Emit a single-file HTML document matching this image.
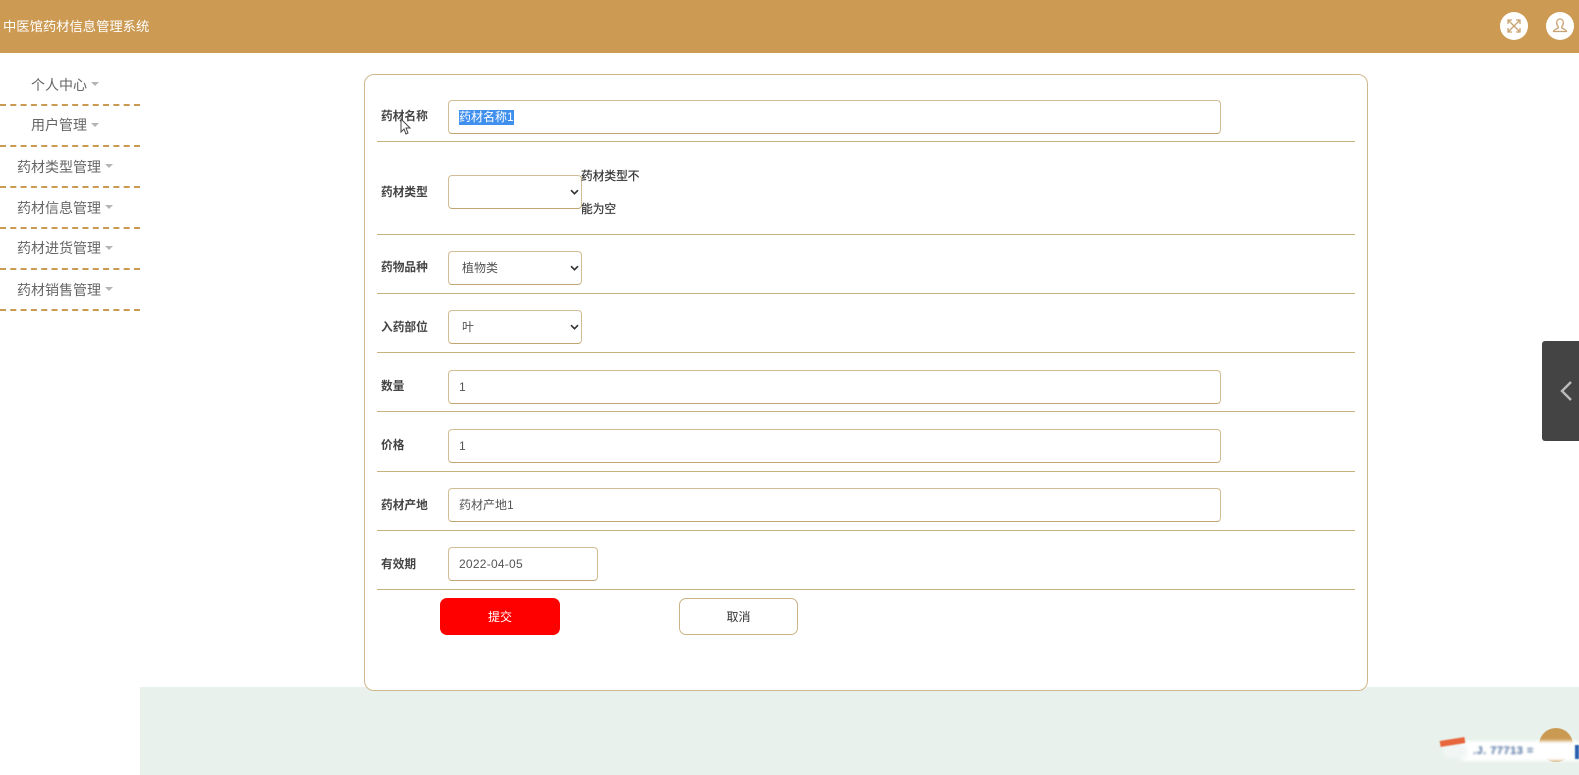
<!DOCTYPE html>
<html lang="zh">
<head>
<meta charset="utf-8">
<title>中医馆药材信息管理系统</title>
<style>
*{box-sizing:border-box}
html,body{margin:0;padding:0;width:1579px;height:775px;overflow:hidden;background:#fff;font-family:"Liberation Sans","Noto Sans CJK SC",sans-serif}
#wrap{position:absolute;left:0;top:0;width:1579px;height:775px;filter:blur(.35px)}
.a{position:absolute}
#hd{left:0;top:0;width:1579px;height:53px;background:#cc9a53}
#title{left:3px;top:17px;font-size:13.3px;line-height:20px;color:#fff;white-space:nowrap}
.circ{width:28px;height:28px;border-radius:50%;background:#fff;top:12px}
.nav{left:0;width:140px;height:41px;border-bottom:2px dashed #cb9a52;font-size:14px;line-height:20px;color:#666;white-space:nowrap}
.nav span{position:absolute;top:10px}
.nav i{position:absolute;top:17px;width:0;height:0;border-left:4px solid transparent;border-right:4px solid transparent;border-top:4px solid #b5b5b5}
#panel{left:364px;top:74px;width:1004px;height:617px;border:1px solid #d0b88c;border-radius:10px;background:#fff;z-index:2}
#green{left:140px;top:687px;width:1439px;height:88px;background:#e8f1ec}
.ln{left:377px;width:978px;height:1px;background:#c9b282;z-index:3}
.lb{left:381px;font-size:11.7px;line-height:16px;font-weight:700;color:#444;white-space:nowrap;z-index:3}
.in{left:448px;height:34px;border:1px solid #d3bd94;border-bottom-color:#c2a671;border-radius:4px;background:#fff;font-size:12px;line-height:32px;color:#555;padding-left:10px;white-space:nowrap;z-index:3}
.sel{width:134px;padding-left:13px}
.sel svg{position:absolute;right:2px;top:13px}
.sel.e{padding-left:0}
.tip{left:581px;font-size:11.7px;line-height:16px;color:#333;white-space:nowrap;z-index:3;-webkit-text-stroke:.2px #333}
.hl{background:#3f8fee;color:#fff;display:inline-block;line-height:15px;height:15px}
.btn{top:598px;height:37px;border-radius:7px;font-size:12px;line-height:37px;text-align:center;z-index:3}
</style>
</head>
<body>
<div id="wrap">
<div id="hd" class="a"></div>
<div id="title" class="a">中医馆药材信息管理系统</div>
<div class="a circ" style="left:1500px">
<svg width="28" height="28" viewBox="0 0 28 28" fill="none" stroke="#c9a271" stroke-width="1.3"><path d="M8 8l12 12M20 8L8 20M8 12V8h4M16 8h4v4M8 16v4h4M16 20h4v-4"/></svg>
</div>
<div class="a circ" style="left:1546px">
<svg width="28" height="28" viewBox="0 0 28 28" fill="none" stroke="#c9a271" stroke-width="1.3"><path d="M14 7c-2.200 0-3.300 1.700-3.300 3.700 0 1.700.6 3 1.500 3.900v1.400c-1.400 1-4.200 1.500-4.700 3.500h13c-.5-2-3.300-2.500-4.700-3.500v-1.400c.9-.9 1.500-2.200 1.500-3.900C17.300 8.700 16.200 7 14 7z"/></svg>
</div>

<div class="a nav" style="top:65px"><span style="left:31px">个人中心</span><i style="left:91px"></i></div>
<div class="a nav" style="top:106px"><span style="left:31px;top:9px">用户管理</span><i style="left:91px"></i></div>
<div class="a nav" style="top:147px"><span style="left:17px">药材类型管理</span><i style="left:105px"></i></div>
<div class="a nav" style="top:188px"><span style="left:17px">药材信息管理</span><i style="left:105px"></i></div>
<div class="a nav" style="top:229px"><span style="left:17px;top:9px">药材进货管理</span><i style="left:105px"></i></div>
<div class="a nav" style="top:270px"><span style="left:17px">药材销售管理</span><i style="left:105px"></i></div>

<div id="green" class="a"></div>
<div id="panel" class="a"></div>

<div class="a ln" style="top:141px"></div>
<div class="a ln" style="top:234px"></div>
<div class="a ln" style="top:293px"></div>
<div class="a ln" style="top:352px"></div>
<div class="a ln" style="top:411px"></div>
<div class="a ln" style="top:471px"></div>
<div class="a ln" style="top:530px"></div>
<div class="a ln" style="top:589px"></div>

<div class="a lb" style="top:109px">药材名称</div>
<div class="a in" style="top:100px;width:773px"><span class="hl">药材名称1</span></div>
<svg class="a" style="left:400px;top:118px;z-index:4" width="12" height="18" viewBox="0 0 12 18"><path d="M1 1v13l3-3 2 5 2-1-2-5h4z" fill="#fff" stroke="#444" stroke-width="1"/></svg>

<div class="a lb" style="top:185px">药材类型</div>
<div class="a in sel e" style="top:175px"><svg width="9" height="7" viewBox="0 0 9 7" fill="none" stroke="#333" stroke-width="1.700"><path d="M1 1.200l3.500 3.500L8 1.200"/></svg></div>
<div class="a tip" style="top:169px">药材类型不</div>
<div class="a tip" style="top:202px">能为空</div>

<div class="a lb" style="top:260px">药物品种</div>
<div class="a in sel" style="top:251px">植物类<svg width="9" height="7" viewBox="0 0 9 7" fill="none" stroke="#333" stroke-width="1.700"><path d="M1 1.200l3.500 3.500L8 1.200"/></svg></div>

<div class="a lb" style="top:320px">入药部位</div>
<div class="a in sel" style="top:310px">叶<svg width="9" height="7" viewBox="0 0 9 7" fill="none" stroke="#333" stroke-width="1.700"><path d="M1 1.200l3.500 3.500L8 1.200"/></svg></div>

<div class="a lb" style="top:379px">数量</div>
<div class="a in" style="top:370px;width:773px">1</div>

<div class="a lb" style="top:438px">价格</div>
<div class="a in" style="top:429px;width:773px">1</div>

<div class="a lb" style="top:498px">药材产地</div>
<div class="a in" style="top:488px;width:773px">药材产地1</div>

<div class="a lb" style="top:557px">有效期</div>
<div class="a in" style="top:547px;width:150px;letter-spacing:.25px">2022-04-05</div>

<div class="a btn" style="left:440px;width:120px;background:#f00;color:#fff;line-height:38px">提交</div>
<div class="a btn" style="left:679px;width:119px;background:#fff;border:1px solid #cdb388;color:#333;line-height:36px">取消</div>

<div class="a" style="left:1542px;top:341px;width:37px;height:100px;background:#444;border-radius:3px 0 0 3px">
<svg style="position:absolute;left:17px;top:39px" width="14" height="22" viewBox="0 0 14 22" fill="none" stroke="#bbb" stroke-width="2.400"><path d="M12 2L3 11l9 9"/></svg>
</div>

<div class="a" style="left:1539px;top:728px;width:34px;height:34px;border-radius:50%;background:#cb9a52"></div>
<div class="a" style="left:1461px;top:741px;width:118px;height:20px;background:#fff;filter:blur(1.500px)"></div>
<div class="a" style="left:1443px;top:745px;width:24px;height:13px;background:#f1f6f4;filter:blur(2px)"></div>
<div class="a" style="left:1440px;top:739px;width:25px;height:6px;background:#e8663c;transform:rotate(-9deg);filter:blur(.6px)"></div>
<div class="a" style="left:1473px;top:744px;font-size:11px;line-height:14px;font-weight:700;color:#4a6b9c;filter:blur(1px);white-space:nowrap;letter-spacing:.5px">.J. 77713 =</div>
<div class="a" style="left:1575px;top:745px;width:4px;height:14px;background:#2a62b0;filter:blur(.5px)"></div>
</div>
</body>
</html>
